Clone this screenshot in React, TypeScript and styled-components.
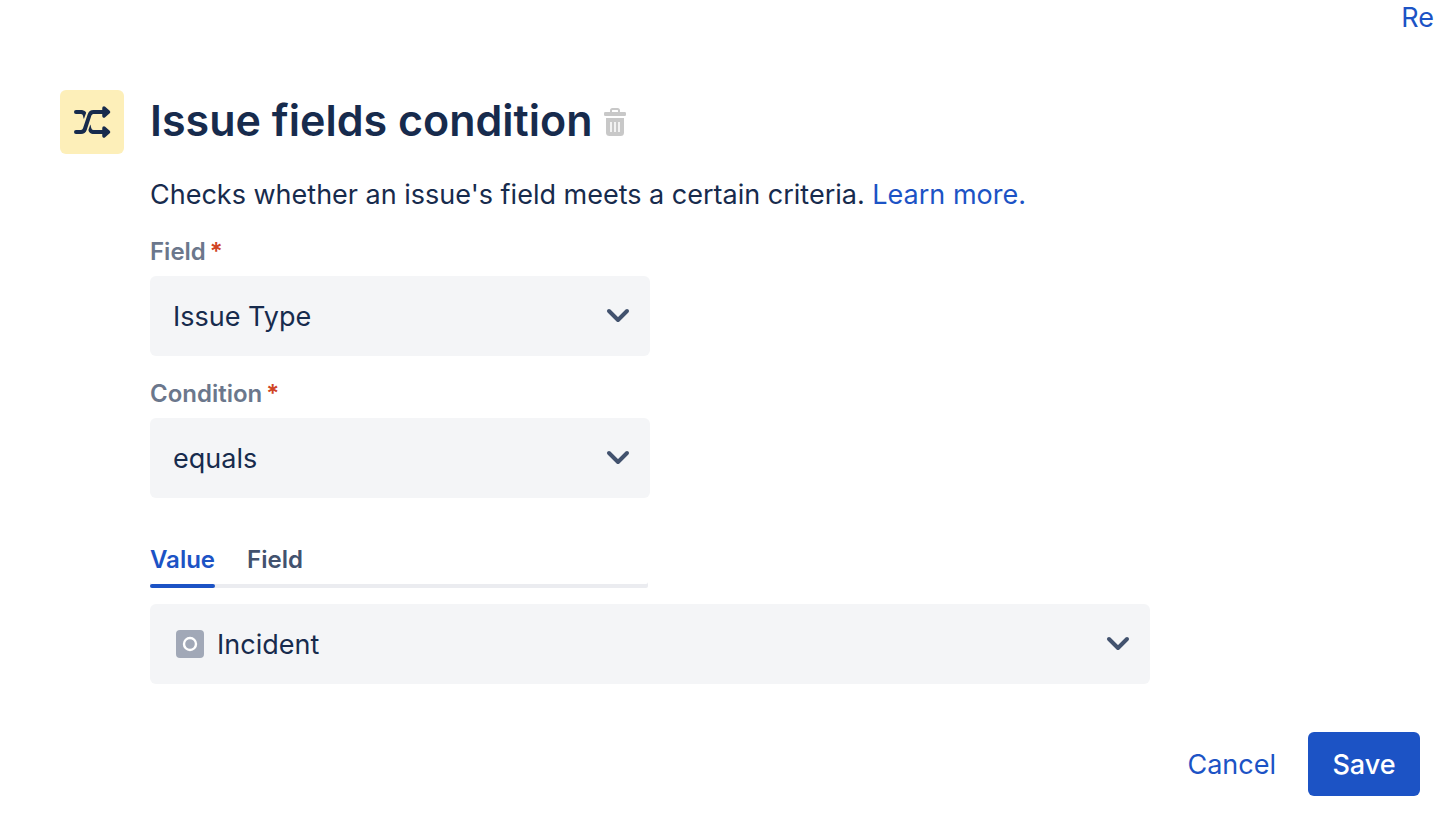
import React, { useState } from "react";
import styled, { createGlobalStyle } from "styled-components";

const ink = "#172b4d";
const blue = "#1c53c5";

const GlobalStyle = createGlobalStyle`
  *, *::before, *::after { box-sizing: border-box; }
  body {
    margin: 0;
    background: #fff;
    color: ${ink};
    font-family: Inter, "Liberation Sans", sans-serif;
    font-size: 27px;
  }
  button, select { font: inherit; color: inherit; border: 0; margin: 0; }
  a { color: ${blue}; text-decoration: none; }
`;

const Page = styled.div`
  overflow: hidden;
`;

const TopBar = styled.nav`
  display: flex;
  justify-content: flex-end;
  height: 36px;
  line-height: 36px;
`;

const TopLink = styled.a`
  white-space: nowrap;
`;

const Panel = styled.main`
  display: grid;
  grid-template-columns: 64px minmax(0, 1fr);
  column-gap: 26px;
  padding: 54px 14px 20px 60px;
`;

const RuleIcon = styled.div`
  width: 64px;
  height: 64px;
  border-radius: 6px;
  background: #fdefb9;

  svg { display: block; }
`;

const TitleRow = styled.header`
  display: flex;
  align-items: center;
  gap: 12px;
  height: 64px;
`;

const Title = styled.h1`
  align-self: flex-start;
  margin: 0;
  font-size: 43px;
  line-height: 60px;
  font-weight: 600;
  white-space: nowrap;
`;

const IconButton = styled.button`
  padding: 0;
  background: none;
  cursor: pointer;

  svg { display: block; }
`;

const Description = styled.p`
  margin: 20px 0 22px;
  line-height: 42px;
`;

const Form = styled.form`
  grid-column: 2;
`;

const FieldGroup = styled.div`
  max-width: 500px;
  margin-bottom: 24px;
`;

const Label = styled.label`
  display: block;
  margin-bottom: 10px;
  font-size: 24px;
  line-height: 28px;
  font-weight: 600;
  color: #6b778c;
`;

const Required = styled.span`
  margin-left: 4px;
  color: #d04423;
`;

const SelectBox = styled.div<{ $max: number }>`
  position: relative;
  max-width: ${(p) => p.$max}px;
`;

const Select = styled.select<{ $withIcon?: boolean }>`
  display: block;
  width: 100%;
  height: 80px;
  padding: 0 60px 0 ${(p) => (p.$withIcon ? 67 : 23)}px;
  border-radius: 6px;
  background: #f4f5f7;
  appearance: none;
`;

const Chevron = styled.svg`
  position: absolute;
  right: 20px;
  top: 32px;
  pointer-events: none;
`;

const TypeIcon = styled.svg`
  position: absolute;
  left: 26px;
  top: 26px;
  pointer-events: none;
`;

const Tabs = styled.div`
  display: flex;
  gap: 32px;
  max-width: 498px;
  margin: 48px 0 16px;
  border-radius: 2px;
  box-shadow: inset 0 -4px #ebecf0;
`;

const Tab = styled.button<{ $active: boolean }>`
  position: relative;
  padding: 0 0 14px;
  background: none;
  font-size: 24px;
  line-height: 28px;
  font-weight: 600;
  color: ${(p) => (p.$active ? blue : "#42526e")};
  cursor: pointer;

  &::after {
    content: "";
    position: absolute;
    left: 0;
    right: 0;
    bottom: 0;
    height: 4px;
    border-radius: 2px;
    background: ${(p) => (p.$active ? blue : "transparent")};
  }
`;

const Actions = styled.footer`
  display: flex;
  justify-content: flex-end;
  gap: 8px;
  margin-top: 48px;
`;

const Button = styled.button<{ $primary?: boolean }>`
  min-width: 112px;
  height: 64px;
  padding: 0 24px;
  border-radius: 6px;
  background: ${(p) => (p.$primary ? blue : "transparent")};
  color: ${(p) => (p.$primary ? "#fff" : blue)};
  font-weight: ${(p) => (p.$primary ? 500 : 400)};
  cursor: pointer;
`;

const ShuffleIcon = () => (
  <svg width="64" height="64" viewBox="0 0 64 64" fill="none" aria-hidden="true">
    <g stroke={ink} strokeWidth="4" strokeLinecap="round" strokeLinejoin="round">
      <path d="M16 42h5c2 0 3.200-1 3.900-3l4.600-14c.7-2 1.900-3 3.900-3H46" />
      <path d="M16 22h5" />
      <path d="M33.500 42H46" />
    </g>
    <path d="M21 20c2.500 0 4.300.9 5.200 2.800l-2.300 6.200c-.8-1.800-.6-5-2.900-5z" fill={ink} />
    <path d="M33.500 44c-2.700 0-4.700-1.400-5.100-4l1.900-5.500c1 2.200.7 5.500 3.200 5.500z" fill={ink} />
    <path
      d="M44 18l4.500 4-4.500 4zM44 38l4.500 4-4.500 4z"
      fill={ink}
      stroke={ink}
      strokeWidth="3.500"
      strokeLinejoin="round"
    />
  </svg>
);

const TrashIcon = () => (
  <svg width="22" height="28" viewBox="0 0 22 28" aria-hidden="true">
    <path d="M7 5V2.500Q7 1 8.500 1h5Q15 1 15 2.500V5" fill="none" stroke="#c8c8c8" strokeWidth="2" />
    <rect x="0" y="4" width="22" height="4" rx="1.200" fill="#c8c8c8" />
    <path d="M2 10h18v14.500q0 3.500-3.500 3.500h-11q-3.500 0-3.500-3.500z" fill="#c8c8c8" />
    <path d="M7 14v10M11 14v10M15 14v10" stroke="#fff" strokeWidth="1.500" />
  </svg>
);

const ChevronIcon = () => (
  <Chevron width="24" height="16" viewBox="0 0 24 16" aria-hidden="true">
    <path
      d="M3 3l9 9 9-9"
      fill="none"
      stroke="#42526e"
      strokeWidth="4"
      strokeLinecap="round"
      strokeLinejoin="round"
    />
  </Chevron>
);

export default function App() {
  const [tab, setTab] = useState("Value");
  return (
    <Page>
      <GlobalStyle />
      <TopBar>
        <TopLink href="#">Re</TopLink>
      </TopBar>
      <Panel>
        <RuleIcon>
          <ShuffleIcon />
        </RuleIcon>
        <TitleRow>
          <Title>Issue fields condition</Title>
          <IconButton type="button" aria-label="Delete condition">
            <TrashIcon />
          </IconButton>
        </TitleRow>
        <Form onSubmit={(e) => e.preventDefault()}>
          <Description>
            Checks whether an issue's field meets a certain criteria. <a href="#">Learn more.</a>
          </Description>
          <FieldGroup>
            <Label htmlFor="field">
              Field<Required>*</Required>
            </Label>
            <SelectBox $max={500}>
              <Select id="field">
                <option>Issue Type</option>
              </Select>
              <ChevronIcon />
            </SelectBox>
          </FieldGroup>
          <FieldGroup>
            <Label htmlFor="condition">
              Condition<Required>*</Required>
            </Label>
            <SelectBox $max={500}>
              <Select id="condition">
                <option>equals</option>
              </Select>
              <ChevronIcon />
            </SelectBox>
          </FieldGroup>
          <Tabs role="tablist">
            {["Value", "Field"].map((name) => (
              <Tab
                key={name}
                type="button"
                role="tab"
                aria-selected={tab === name}
                $active={tab === name}
                onClick={() => setTab(name)}
              >
                {name}
              </Tab>
            ))}
          </Tabs>
          <SelectBox $max={1000}>
            <Select $withIcon aria-label="Value">
              <option>Incident</option>
            </Select>
            <TypeIcon width="28" height="28" viewBox="0 0 28 28" aria-hidden="true">
              <rect width="28" height="28" rx="4" fill="#a1a8b7" />
              <circle cx="14" cy="14" r="6" fill="none" stroke="#fff" strokeWidth="2.400" />
            </TypeIcon>
            <ChevronIcon />
          </SelectBox>
          <Actions>
            <Button type="button">Cancel</Button>
            <Button type="submit" $primary>
              Save
            </Button>
          </Actions>
        </Form>
      </Panel>
    </Page>
  );
}
